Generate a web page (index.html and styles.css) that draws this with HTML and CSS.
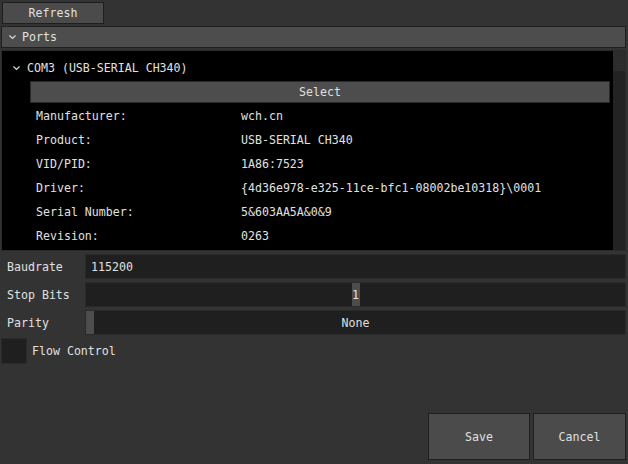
FILE: index.html
```html
<!DOCTYPE html>
<html lang="en">
<head>
    <meta charset="UTF-8">
    <meta name="viewport" content="width=device-width, initial-scale=1.0">
    <title>Serial Port Settings</title>

    <link rel="stylesheet" href="styles.css">
</head>
<body>

<div class="app">
    <div class="toolbar">
        <button class="btn refresh__btn">Refresh</button>
    </div>

    <div class="section__header">
        <svg class="arrow" width="7" height="5" viewBox="0 0 7 5"><path d="M0.5 0.5 L3.5 3.5 L6.5 0.5" fill="none" stroke="#dcdcdc" stroke-width="1.2"/></svg>
        Ports
    </div>

    <!-- ports list start -->
    <div class="ports">
        <div class="ports__list">
            <div class="port__node">
                <svg class="arrow" width="7" height="5" viewBox="0 0 7 5"><path d="M0.5 0.5 L3.5 3.5 L6.5 0.5" fill="none" stroke="#dcdcdc" stroke-width="1.2"/></svg>
                COM3 (USB-SERIAL CH340)
            </div>
            <button class="btn select__btn">Select</button>
            <ul class="port__props">
                <li><span>Manufacturer:</span><span>wch.cn</span></li>
                <li><span>Product:</span><span>USB-SERIAL CH340</span></li>
                <li><span>VID/PID:</span><span>1A86:7523</span></li>
                <li><span>Driver:</span><span>{4d36e978-e325-11ce-bfc1-08002be10318}\0001</span></li>
                <li><span>Serial Number:</span><span>5&amp;603AA5A&amp;0&amp;9</span></li>
                <li><span>Revision:</span><span>0263</span></li>
            </ul>
        </div>
        <div class="scrollbar"><div class="scrollbar__grab"></div></div>
    </div>
    <!-- ports list end -->

    <div class="setting">
        <label>Baudrate</label>
        <div class="field field--input">115200</div>
    </div>
    <div class="setting">
        <label>Stop Bits</label>
        <div class="field field--slider"><span class="grab grab--value">1</span></div>
    </div>
    <div class="setting">
        <label>Parity</label>
        <div class="field field--slider"><span class="grab grab--left"></span><span class="field__text">None</span></div>
    </div>
    <div class="check">
        <span class="check__box"></span>
        <label>Flow Control</label>
    </div>

    <div class="actions">
        <button class="btn action__btn save__btn">Save</button>
        <button class="btn action__btn cancel__btn">Cancel</button>
    </div>
</div>

</body>
</html>
```

FILE: styles.css
```css
*, *::after, *::before {
    margin: 0;padding: 0;box-sizing: border-box;
    font-family: 'DejaVu Sans Mono', 'Liberation Mono', monospace;
    font-size: 11.6px;
    font-weight: normal;
}
body {
    background-color: #333333;
    color: #e0e0e0;
}
.app {
    height: 100vh;
    display: flex;
    flex-direction: column;
    padding: 2px 2px 4px 1px;
}
.btn {
    border: 1px solid #1f1f1f;outline: none;
    background-color: #4b4b4b;
    color: #e0e0e0;
    cursor: pointer;
}
.toolbar {display: flex;}
.refresh__btn {width: 102px;height: 22px;margin-left: 1px;}

.section__header {
    margin-top: 2px;
    height: 22px;
    background-color: #4d4d4d;
    border: 1px solid #1f1f1f;
    display: flex;
    align-items: center;
    gap: 6px;
    padding-left: 7px;
}
.arrow {flex: none;margin-top: 1px;}

.ports {
    margin-top: 2px;
    height: 201px;
    display: flex;
    background-color: #000;
    border: 1px solid #2a2a2a;
}
.ports__list {flex: 1;padding: 7px 3px 0 0;}
.port__node {
    height: 20px;
    display: flex;
    align-items: center;
    gap: 7px;
    padding-left: 11px;
}
.select__btn {
    display: block;
    margin: 3px 0 1px 28px;
    width: calc(100% - 28px);
    height: 22px;
    background-color: #4d4d4d;
    border-color: #2a2a2a;
}
.port__props {list-style: none;padding-left: 34px;}
.port__props li {height: 24px;display: flex;align-items: center;}
.port__props li span:first-child {width: 205px;}

.scrollbar {width: 12px;background-color: #232323;}
.scrollbar__grab {height: 20px;background-color: #2d2d2d;}

.setting {
    margin-top: 3px;
    height: 25px;
    display: flex;
}
.setting label {width: 84px;padding-left: 6px;display: flex;align-items: center;}
.field {
    flex: 1;
    background-color: #1f1f1f;
    border: 1px solid #2a2a2a;
    display: flex;
    align-items: center;
    position: relative;
}
.field--input {padding-left: 5px;}
.field--slider {justify-content: center;}
.grab {
    width: 8px;
    height: 23px;
    background-color: #4d4d4d;
    display: flex;
    align-items: center;
    justify-content: center;
}
.grab--left {position: absolute;left: 0;top: 0;}

.check {margin-top: 3px;display: flex;align-items: center;gap: 5px;}
.check__box {width: 26px;height: 26px;background-color: #1f1f1f;border: 1px solid #2a2a2a;}

.actions {margin-top: auto;display: flex;justify-content: flex-end;gap: 3px;}
.action__btn {height: 47px;background-color: #4b4b4b;}
.save__btn {width: 102px;}
.cancel__btn {width: 93px;}
```
